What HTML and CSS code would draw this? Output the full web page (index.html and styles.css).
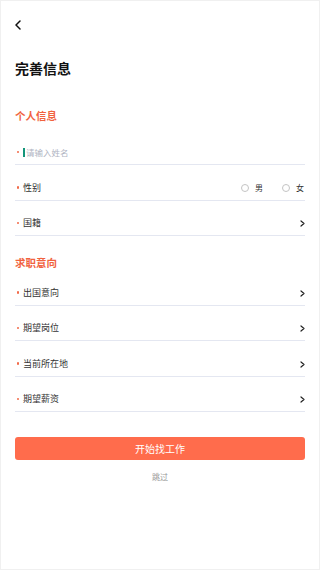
FILE: index.html
```html
<!DOCTYPE html>
<html lang="zh-CN">

<head>
    <meta charset="UTF-8">
    <meta name="viewport" content="width=device-width, initial-scale=1.0">
    <title>完善信息</title>
    <link rel="stylesheet" href="styles.css">
</head>

<body>
    <div class="page">
        <div class="header">
            <svg class="back" width="8" height="10" viewBox="0 0 8 10">
                <path d="M6 1 L2 5 L6 9" fill="none" stroke="#111" stroke-width="1.5" stroke-linecap="round" stroke-linejoin="round"/>
            </svg>
        </div>

        <h2 class="title">完善信息</h2>

        <div class="section section-first">
            <div class="section-title">个人信息</div>

            <div class="row">
                <span class="star"></span>
                <span class="caret"></span>
                <span class="placeholder">请输入姓名</span>
            </div>

            <div class="row">
                <span class="star"></span>
                <span class="label">性别</span>
                <div class="radios">
                    <span class="radio"><i class="circle"></i>男</span>
                    <span class="radio"><i class="circle"></i>女</span>
                </div>
            </div>

            <div class="row">
                <span class="star"></span>
                <span class="label">国籍</span>
                <svg class="arrow" width="5" height="7" viewBox="0 0 5 7">
                    <path d="M1 1 L4 3.5 L1 6" fill="none" stroke="#222" stroke-width="1.2" stroke-linecap="round" stroke-linejoin="round"/>
                </svg>
            </div>
        </div>

        <div class="section section-second">
            <div class="section-title">求职意向</div>

            <div class="row">
                <span class="star"></span>
                <span class="label">出国意向</span>
                <svg class="arrow" width="5" height="7" viewBox="0 0 5 7">
                    <path d="M1 1 L4 3.5 L1 6" fill="none" stroke="#222" stroke-width="1.2" stroke-linecap="round" stroke-linejoin="round"/>
                </svg>
            </div>

            <div class="row">
                <span class="star"></span>
                <span class="label">期望岗位</span>
                <svg class="arrow" width="5" height="7" viewBox="0 0 5 7">
                    <path d="M1 1 L4 3.5 L1 6" fill="none" stroke="#222" stroke-width="1.2" stroke-linecap="round" stroke-linejoin="round"/>
                </svg>
            </div>

            <div class="row">
                <span class="star"></span>
                <span class="label">当前所在地</span>
                <svg class="arrow" width="5" height="7" viewBox="0 0 5 7">
                    <path d="M1 1 L4 3.5 L1 6" fill="none" stroke="#222" stroke-width="1.2" stroke-linecap="round" stroke-linejoin="round"/>
                </svg>
            </div>

            <div class="row">
                <span class="star"></span>
                <span class="label">期望薪资</span>
                <svg class="arrow" width="5" height="7" viewBox="0 0 5 7">
                    <path d="M1 1 L4 3.5 L1 6" fill="none" stroke="#222" stroke-width="1.2" stroke-linecap="round" stroke-linejoin="round"/>
                </svg>
            </div>
        </div>

        <button class="start-button">开始找工作</button>
        <div class="skip">跳过</div>
    </div>
</body>

</html>
```

FILE: styles.css
```css
body {
    margin: 0;
    font-family: "Noto Sans CJK SC", "Noto Sans", sans-serif;
    background-color: #fff;
    color: #333;
}

.page {
    box-sizing: border-box;
    width: 320px;
    height: 570px;
    border: 1px solid #f0f0f0;
    padding: 0 14px 0 14px;
}

.header {
    height: 47px;
    display: flex;
    align-items: center;
}

.back {
    margin-left: -1px;
}

.title {
    margin: 10px 0 0 0;
    height: 20px;
    line-height: 20px;
    font-size: 14px;
    font-weight: bold;
    color: #111;
}

.section-title {
    height: 14px;
    line-height: 14px;
    font-size: 10.5px;
    font-weight: bold;
    color: #f1623e;
}

.section-first {
    margin-top: 31px;
}

.section-first .section-title {
    margin-bottom: 6.5px;
}

.section-second {
    margin-top: 20px;
}

.row {
    box-sizing: border-box;
    height: 35.5px;
    border-bottom: 1px solid #e4e7f1;
    display: flex;
    align-items: flex-end;
    padding-bottom: 6px;
    line-height: 12px;
}

.star {
    width: 2.5px;
    height: 2.5px;
    border-radius: 50%;
    background: #f26a48;
    margin: 0 4px 5px 1.5px;
}

.label {
    font-size: 9px;
    color: #333;
    flex: 1;
}

.caret {
    width: 1.5px;
    height: 9px;
    margin-bottom: 1.5px;
    background: #14957a;
    margin-right: 1.5px;
}

.placeholder {
    font-size: 8.5px;
    color: #b0b4c2;
}

.radios {
    display: flex;
    gap: 19px;
    margin-right: 1px;
}

.radio {
    display: flex;
    align-items: center;
    gap: 6px;
    font-size: 8px;
    color: #333;
}

.circle {
    box-sizing: border-box;
    width: 8px;
    height: 8px;
    border: 1px solid #c4c4c4;
    border-radius: 50%;
}

.arrow {
    margin-right: 0;
    margin-bottom: 2px;
}

.start-button {
    display: block;
    width: 100%;
    height: 23px;
    margin-top: 24.5px;
    border: none;
    border-radius: 3px;
    background: #ff6c4c;
    color: #fff;
    font-family: inherit;
    font-size: 10px;
    padding: 0;
}

.skip {
    margin-top: 11px;
    text-align: center;
    font-size: 8px;
    line-height: 12px;
    color: #999;
}
```
